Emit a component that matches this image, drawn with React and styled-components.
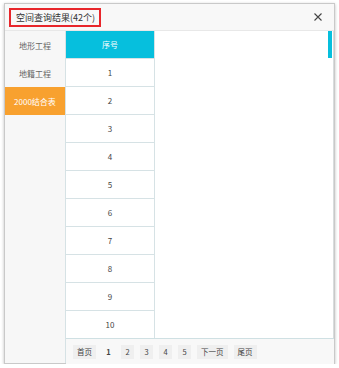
import React from "react";
import styled, { createGlobalStyle } from "styled-components";

const Global = createGlobalStyle`
  html, body { margin: 0; padding: 0; background: #fff; }
  body { font-family: "Noto Sans CJK SC", "Noto Sans", sans-serif; }
`;

const Dialog = styled.div`
  margin: 3px 0 0 4px;
  width: 331px;
  height: 361px;
  box-sizing: border-box;
  border: 1px solid #c9c9c9;
  box-shadow: 0 1px 3px rgba(0,0,0,0.25);
  background: #fff;
  display: flex;
  flex-direction: column;
`;

const Header = styled.div`
  height: 26px;
  flex: none;
  background: #f8f8f8;
  border-bottom: 1px solid #e8e8e8;
  display: flex;
  align-items: center;
  justify-content: space-between;
  padding: 0 12px 0 4px;
`;

const Title = styled.div`
  border: 2px solid #e8262b;
  height: 19px;
  box-sizing: border-box;
  padding: 0 4px 0 5px;
  display: flex;
  align-items: center;
  font-size: 9px;
  color: #333;
  white-space: nowrap;
`;

const Close = styled.div`
  width: 9px;
  height: 9px;
  display: flex;
  align-items: center;
  justify-content: center;
`;

const Body = styled.div`
  flex: 1;
  display: flex;
  min-height: 0;
`;

const Side = styled.div`
  width: 60px;
  flex: none;
  background: #f7f7f7;
  border-right: 1px solid #d6e2e5;
  display: flex;
  flex-direction: column;
`;

const SideItem = styled.div`
  height: 28px;
  display: flex;
  align-items: center;
  justify-content: center;
  font-size: 8px;
  color: ${p => (p.$active ? "#fff" : "#666")};
  background: ${p => (p.$active ? "#f8a12f" : "transparent")};
`;

const Main = styled.div`
  flex: 1;
  display: flex;
  flex-direction: column;
  min-width: 0;
`;

const TableArea = styled.div`
  flex: 1;
  display: flex;
`;

const Column = styled.div`
  width: 88px;
  flex: none;
  border-right: 1px solid #d6e2e5;
  display: flex;
  flex-direction: column;
`;

const HeadCell = styled.div`
  height: 27px;
  background: #06bfdd;
  color: #fff;
  font-size: 8px;
  display: flex;
  align-items: center;
  justify-content: center;
`;

const Cell = styled.div`
  height: 27px;
  border-top: 1px solid #d6e2e5;
  display: flex;
  align-items: center;
  justify-content: center;
  font-size: 8px;
  color: #444;
`;

const Blank = styled.div`
  flex: 1;
  display: flex;
  justify-content: flex-end;
`;

const Scroll = styled.div`
  width: 5px;
  display: flex;
  flex-direction: column;
  border-right: 1px solid #d8dcdd;
`;

const Thumb = styled.div`
  height: 27px;
  width: 4px;
  background: #06bfdd;
`;

const Pager = styled.div`
  height: 25px;
  flex: none;
  border-top: 1px solid #cfe0e3;
  background: #f8f8f8;
  display: flex;
  align-items: center;
  padding-left: 7px;
  gap: 6px;
`;

const PageBtn = styled.div`
  height: 14px;
  padding: 0 4px;
  min-width: 5px;
  display: flex;
  align-items: center;
  justify-content: center;
  background: ${p => (p.$current ? "transparent" : "#efefef")};
  font-size: 7.5px;
  font-weight: ${p => (p.$current ? 700 : 400)};
  color: #444;
`;

const rows = [1, 2, 3, 4, 5, 6, 7, 8, 9, 10];

export default function App() {
  return (
    <>
      <Global />
      <Dialog>
        <Header>
          <Title>空间查询结果(42个)</Title>
          <Close>
            <svg width="8" height="8" viewBox="0 0 8 8">
              <path d="M0.5 0.5L7.5 7.5M7.5 0.5L0.5 7.5" stroke="#444" strokeWidth="1.1" />
            </svg>
          </Close>
        </Header>
        <Body>
          <Side>
            <SideItem>地形工程</SideItem>
            <SideItem>地籍工程</SideItem>
            <SideItem $active>2000结合表</SideItem>
          </Side>
          <Main>
            <TableArea>
              <Column>
                <HeadCell>序号</HeadCell>
                {rows.map(r => (
                  <Cell key={r}>{r}</Cell>
                ))}
              </Column>
              <Blank>
                <Scroll>
                  <Thumb />
                </Scroll>
              </Blank>
            </TableArea>
            <Pager>
              <PageBtn>首页</PageBtn>
              <PageBtn $current>1</PageBtn>
              <PageBtn>2</PageBtn>
              <PageBtn>3</PageBtn>
              <PageBtn>4</PageBtn>
              <PageBtn>5</PageBtn>
              <PageBtn>下一页</PageBtn>
              <PageBtn>尾页</PageBtn>
            </Pager>
          </Main>
        </Body>
      </Dialog>
    </>
  );
}
